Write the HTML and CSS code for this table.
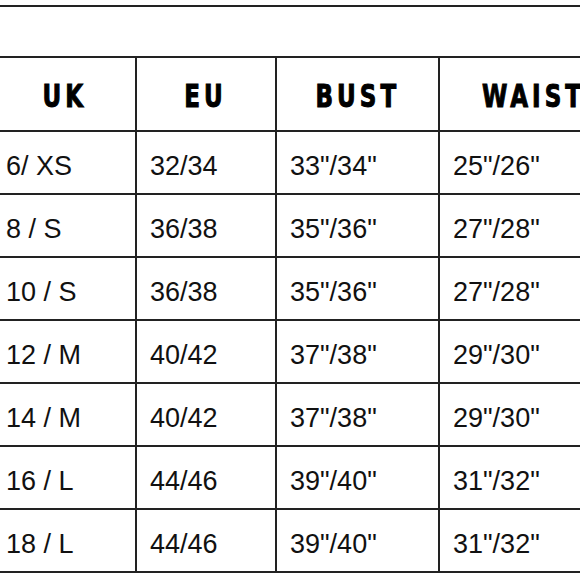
FILE: index.html
```html
<!DOCTYPE html>
<html>
<head>
<meta charset="utf-8">
<link rel="stylesheet" href="styles.css">
</head>
<body>
<table class="chart">
  <colgroup>
    <col class="c-uk"><col class="c-eu"><col class="c-bust"><col class="c-waist">
  </colgroup>
  <tr class="title-row"><td colspan="4"></td></tr>
  <tr class="head-row">
    <th class="uk"><span class="lbl">UK</span></th><th><span class="lbl">EU</span></th><th><span class="lbl">BUST</span></th><th class="waist"><span class="lbl">WAIST</span></th>
  </tr>
  <tr class="data"><td>6/ XS</td><td>32/34</td><td>33"/34"</td><td>25"/26"</td></tr>
  <tr class="data"><td>8 / S</td><td>36/38</td><td>35"/36"</td><td>27"/28"</td></tr>
  <tr class="data"><td>10 / S</td><td>36/38</td><td>35"/36"</td><td>27"/28"</td></tr>
  <tr class="data"><td>12 / M</td><td>40/42</td><td>37"/38"</td><td>29"/30"</td></tr>
  <tr class="data"><td>14 / M</td><td>40/42</td><td>37"/38"</td><td>29"/30"</td></tr>
  <tr class="data"><td>16 / L</td><td>44/46</td><td>39"/40"</td><td>31"/32"</td></tr>
  <tr class="data"><td>18 / L</td><td>44/46</td><td>39"/40"</td><td>31"/32"</td></tr>
</table>
</body>
</html>
```
FILE: styles.css
```css
html, body {
  margin: 0;
  padding: 0;
  background: #fff;
  overflow: hidden;
  width: 580px;
  height: 580px;
}
.chart {
  margin-top: 5px;
  border-collapse: collapse;
  table-layout: fixed;
  width: 640px;
  color: #111;
}
.c-uk { width: 136px; }
.c-eu { width: 140px; }
.c-bust { width: 163px; }
.c-waist { width: 201px; }
.chart td, .chart th {
  border: 2px solid #222;
  padding: 0;
}
.chart tr > :first-child { border-left: none; }
.title-row td { height: 49px; }
.head-row th {
  height: 74px;
  box-sizing: border-box;
  font-family: "DejaVu Sans Condensed", "DejaVu Sans", sans-serif;
  font-weight: 700;
  font-size: 32px;
  letter-spacing: 5px;
  -webkit-text-stroke: 1px #000;
  color: #000;
  text-align: center;
  padding: 3px 5px 0 0;
}
.head-row th.uk { padding-right: 10px; }
.lbl {
  display: inline-block;
  transform: scaleX(0.8);
  margin-right: -5px;
}
.head-row th.waist { text-align: left; padding-left: 42px; }
.head-row th.waist .lbl { transform-origin: left center; }
.data td {
  height: 63px;
  font-family: "Liberation Sans", Arial, sans-serif;
  font-size: 27px;
  padding-left: 13px;
  padding-top: 7px;
  box-sizing: border-box;
  vertical-align: middle;
}
.data td:first-child { padding-left: 6px; }
```
